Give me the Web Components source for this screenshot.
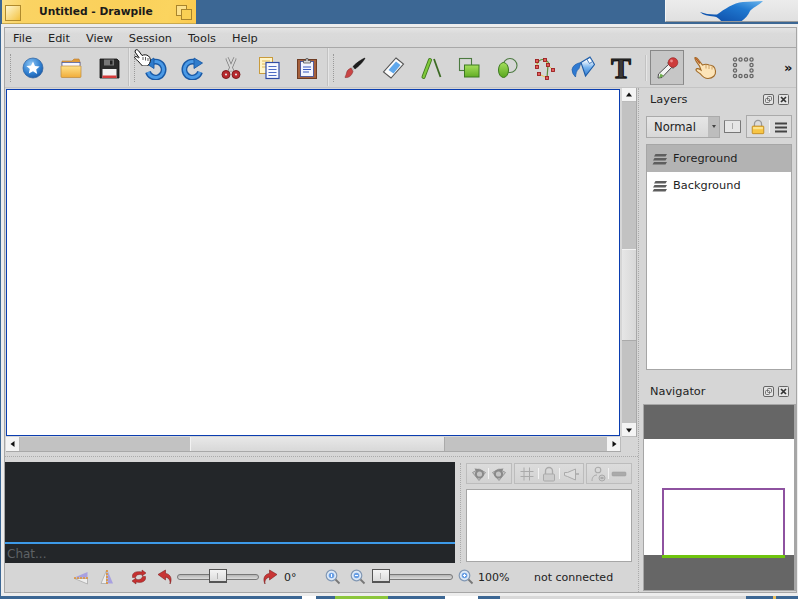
<!DOCTYPE html>
<html><head><meta charset="utf-8">
<style>
html,body{margin:0;padding:0;width:798px;height:599px;overflow:hidden;background:#3c6794;font:11.33px "DejaVu Sans",sans-serif;color:#222}
</style></head><body>
<dp-app></dp-app>
<script>
const UNDO=`<path d="M5 16A8 8 0 1 0 10 6" fill="none" stroke="#1a5aa6" stroke-width="5.800"/><path d="M5 16A8 8 0 1 0 10 6" fill="none" stroke="#4b9ae6" stroke-width="3"/><path d="M2.500 7L11 2V12.500z" fill="#2f7ccc" stroke="#1a5aa6" stroke-width=".9"/>`;
const ICONS={
new:`<defs><radialGradient id="g" cx=".4" cy=".3" r=".8"><stop offset="0" stop-color="#8cc4f2"/><stop offset=".6" stop-color="#2f7fd0"/><stop offset="1" stop-color="#154f9c"/></radialGradient></defs><circle cx="12" cy="12" r="10" fill="url(#g)" stroke="#2a5f9e" stroke-width=".7"/><path d="M12 5.500l2 4.400 4.600.5-3.400 3.100 1 4.600L12 15.300l-4.200 2.300 1-4.600-3.400-3.100 4.600-.5z" fill="#fff"/>`,
open:`<defs><linearGradient id="g" x2="0" y2="1"><stop offset="0" stop-color="#ffe28a"/><stop offset="1" stop-color="#f0ac3a"/></linearGradient></defs><path d="M3 5h10l2-2h5l1 3v3H3z" fill="#e09a38" stroke="#b87a2c" stroke-width=".6"/><rect x="3" y="6.500" width="18" height="4" fill="#f6f6ff" stroke="#3b55a8" stroke-width=".7"/><path d="M2 10h20v10.500q0 1-1 1H3q-1 0-1-1z" fill="url(#g)" stroke="#bb8a3c" stroke-width=".7"/>`,
save:`<path d="M3 3h17l2 2v17H3z" fill="#2c2c2c" stroke="#111" stroke-width=".8"/><rect x="7" y="3.500" width="10" height="6" fill="#777"/><rect x="13" y="4.500" width="2.500" height="4" fill="#222"/><rect x="5.500" y="13" width="14" height="9" fill="#f2f2f2"/><rect x="5.500" y="19.500" width="14" height="2.500" fill="#d63b3b"/>`,
undo:UNDO,
redo:`<g transform="matrix(-1 0 0 1 24 0)">${UNDO}</g>`,
cut:`<path d="M8 2l5.500 13M16 2l-5.500 13" stroke="#777" stroke-width="3.400" fill="none"/><path d="M8 2l5.500 13M16 2l-5.500 13" stroke="#d8d8d8" stroke-width="2" fill="none"/><circle cx="7" cy="18.500" r="4" fill="#b8282e" stroke="#7e1e1e"/><circle cx="17" cy="18.500" r="4" fill="#b8282e" stroke="#7e1e1e"/><circle cx="7" cy="18.500" r="1.100" fill="#ddd"/><circle cx="17" cy="18.500" r="1.100" fill="#ddd"/>`,
copy:`<rect x="2.500" y="1.500" width="13" height="16" fill="#fff5c8" stroke="#c99b3c"/><path d="M5 5h8M5 8h8M5 11h8" stroke="#e0b858"/><rect x="9" y="6.500" width="13" height="16" fill="#f6f8ff" stroke="#2f4ba4" stroke-width="1.200"/><path d="M11.500 10.500h8M11.500 13.500h8M11.500 16.500h8M11.500 19.500h8" stroke="#4d6bc4" stroke-width="1.200"/>`,
paste:`<rect x="2.500" y="3.500" width="19" height="19" fill="#a6603c" stroke="#6e3c24"/><rect x="5.500" y="5.500" width="13" height="15" fill="#f4f6ff" stroke="#34499c" stroke-width=".8"/><path d="M8 11h8M8 13.500h8M8 16h6" stroke="#3a5bc0" stroke-width="1.200"/><path d="M8.500 7V4.500h2.500v-2h2v2h2.500V7z" fill="#d8d8d8" stroke="#555" stroke-width=".8"/>`,
brush:`<path d="M22 2c-1 3-6 8-10 11l-2-2.500C13 7 19 3 22 2z" fill="#1d1d1d" stroke="#000" stroke-width=".5"/><path d="M11.500 13.500l-2.300-3 -1.500 1.500 2.300 3z" fill="#bbb"/><path d="M8 12c-2 1-4 2-4.500 5-.3 2-1.500 3.500-1.500 4.500 3 .5 6.500-1 8-6z" fill="#c94545" stroke="#7e2a2a" stroke-width=".5"/>`,
eraser:`<path d="M15 2l7.500 6L10 22l-7.500-6z" fill="#fcfcfc" stroke="#555" stroke-width="1.100"/><path d="M15 5.500l4.500 3.500-7 8.500-5-3.500z" fill="#5fa8ec"/>`,
line:`<path d="M4.500 21L11 4" stroke="#3f7a1e" stroke-width="4" stroke-linecap="round"/><path d="M4.500 21L11 4" stroke="#80c83c" stroke-width="2.200" stroke-linecap="round"/><path d="M15 3l6.500 18" stroke="#3c6a24" stroke-width="1.800"/>`,
rect:`<rect x="2.500" y="2.500" width="12" height="12" fill="none" stroke="#4c7a40" stroke-width="1.100"/><defs><linearGradient id="g" x2="0" y2="1"><stop offset="0" stop-color="#a5df5c"/><stop offset="1" stop-color="#62ad24"/></linearGradient></defs><rect x="7.500" y="9" width="14.500" height="12" fill="url(#g)" stroke="#3c7a20"/>`,
ellipse:`<circle cx="15" cy="9.500" r="7" fill="none" stroke="#4c7a40" stroke-width="1.100"/><defs><linearGradient id="g" x2="0" y2="1"><stop offset="0" stop-color="#a5df5c"/><stop offset="1" stop-color="#58a61e"/></linearGradient></defs><ellipse cx="8.500" cy="14" rx="5" ry="7.500" fill="url(#g)" stroke="#3c7a20"/>`,
bezier:`<path d="M4 8Q7 2 12 4T15 9L14 22" fill="none" stroke="#5a8f3a" stroke-width="1.200"/><path d="M4 11V5M12 4l3 5 5 5M6 18l8 4" stroke="#e8c84a" fill="none" stroke-width="1"/><g fill="#e25c5c" stroke="#9c2020" stroke-width=".9"><rect x="2.500" y="9.500" width="3" height="3"/><rect x="2.500" y="3.500" width="3" height="3"/><rect x="10.500" y="2.500" width="3" height="3"/><rect x="13.500" y="7.500" width="3" height="3"/><rect x="18.500" y="12.500" width="3" height="3"/><rect x="4.500" y="16.500" width="3" height="3"/><rect x="12.500" y="20.500" width="3" height="3"/></g>`,
fill:`<defs><linearGradient id="g" x2="0" y2="1"><stop offset=".2" stop-color="#f2f7fd"/><stop offset=".55" stop-color="#79b4ee"/><stop offset="1" stop-color="#2f7ad2"/></linearGradient></defs><path d="M10 6.500L19 1l4.500 7.500L14.500 20z" fill="url(#g)" stroke="#1c5ca8" stroke-width="1.100"/><path d="M16 3.500l3-2 2.500 4-3 2z" fill="#fff" stroke="#1c5ca8" stroke-width=".8"/><path d="M10 6.500Q2 8 1 13.500q0 4 3.500 7.500c.5-3 .5-6 3.500-8.500z" fill="#2f7ad2" stroke="#1c5ca8" stroke-width=".7"/>`,
picker:`<path d="M14 8l3 3L7 21.500 3 22l.5-4z" fill="#f4f4f4" stroke="#4d4d4d" stroke-width="1"/><path d="M5.500 17.500l3 2L7 21 4 22z" fill="#70b050"/><path d="M12 7l6 6 1.500-1.500-6-6z" fill="#777"/><circle cx="18" cy="6.500" r="4.800" fill="#cd3b3b" stroke="#9c2a2a" stroke-width=".7"/><circle cx="16.500" cy="5" r="1.400" fill="#ee8a8a"/>`,
hand:`<path d="M2 1.500C4 1 5 3 6 4.500L9.500 9C12 8 14 8 16 9c3 0 6 2 6.500 6 .5 4-2.500 7.500-7.500 7.500-4 0-6-2.500-7.500-4.500C6 16.500 2.500 15.500 3 13.500 3.500 12 6 12.500 8 14L6.500 10C5 7.500 1 3.500 2 1.500z" fill="#fce4b8" stroke="#a06a28" stroke-width="1.100"/><path d="M13 9v3.500M16 9.500V13M19 10.500V13.500" stroke="#c89a5c" stroke-width=".9"/><path d="M2.500 2L7 7.500" stroke="#b55a20" stroke-width="1.300"/>`,
select:`<g fill="none" stroke="#666" stroke-width="1.300"><circle cx="4" cy="3.500" r="1.600"/><circle cx="9.500" cy="3.500" r="1.600"/><circle cx="15" cy="3.500" r="1.600"/><circle cx="20.500" cy="3.500" r="1.600"/><circle cx="4" cy="9" r="1.600"/><circle cx="20.500" cy="9" r="1.600"/><circle cx="4" cy="14.500" r="1.600"/><circle cx="20.500" cy="14.500" r="1.600"/><circle cx="4" cy="20" r="1.600"/><circle cx="9.500" cy="20" r="1.600"/><circle cx="15" cy="20" r="1.600"/><circle cx="20.500" cy="20" r="1.600"/></g>`,
cursor:`<path d="M1.500 1C3 0 4.500 1.500 5.500 3L8 6.500C10 5.500 12.500 5.500 14.500 7c2 1.500 2.500 5 1 7.500L13.500 17H8.500C7 15.500 5 13 3.500 11.500 2 10.500.5 9 .5 8c.5-1 2.500-.5 4 1L5 8.500 1 3z" fill="#fff" stroke="#111" stroke-width="1"/><path d="M9 8v3M11.500 8v3.500M14 9v3" stroke="#111" stroke-width=".7"/>`,
layer:`<g fill="#5e5e5e"><path d="M3 5.500l1.500-2.500H16l-1.500 2.500z"/><path d="M2 9.500l1.500-2.500H16l-1.500 2.500z"/><path d="M1.500 13.500L3 11h13l-1.500 2.500z"/></g>`,
lock:`<path d="M5 8V5.500a4 4 0 0 1 8 0V8" fill="none" stroke="#999" stroke-width="1.400"/><rect x="2.500" y="8" width="13" height="8.500" rx=".8" fill="#f7c544" stroke="#c08a20"/><rect x="3.500" y="9" width="11" height="2.500" fill="#fde38c"/>`,
menu:`<path d="M2 4.500h12M2 8.500h12M2 12.500h12" stroke="#444" stroke-width="1.800"/>`,
flipv:`<path d="M1.500 8.500L14.500 3v5.500z" fill="#a8a0e0"/><path d="M1.500 9.500l13 5.500V9.500z" fill="#eee" stroke="#aaa" stroke-width=".8"/><path d="M1 9h14" stroke="#e09030" stroke-width="1.600" stroke-dasharray="2 1"/>`,
fliph:`<path d="M7.500 1.500L2 14.500h5.500z" fill="#eee" stroke="#aaa" stroke-width=".8"/><path d="M8.500 1.500L14 14.500H8.500z" fill="#a8a0e0"/><path d="M8 1v14" stroke="#e09030" stroke-width="1.600" stroke-dasharray="2 1"/>`,
rotreset:`<path d="M1.500 6C2.500 3 6 2 11 3V1l4 3-4 3V5.500C7 5 5 6 4.500 8.500H1.500z" fill="#c53030" stroke="#7e1e1e" stroke-width=".5"/><path d="M14.500 10C13.500 13 10 14 5 13v2l-4-3 4-3v1.500c4 .5 6-.5 6.500-3h3z" fill="#c53030" stroke="#7e1e1e" stroke-width=".5"/>`,
rotl:`<path d="M14 15c.5-3-.5-6-4.500-7V11L2 5.500 9.500 1v3.500c5 .5 7 5.500 4.500 10.500z" fill="#c93535" stroke="#7e1e1e" stroke-width=".6"/>`,
rotr:`<g transform="matrix(-1 0 0 1 16 0)"><path d="M14 15c.5-3-.5-6-4.500-7V11L2 5.500 9.500 1v3.500c5 .5 7 5.500 4.500 10.500z" fill="#c93535" stroke="#7e1e1e" stroke-width=".6"/></g>`,
zoomf:`<circle cx="6.500" cy="6.500" r="5.300" fill="#dce8f6" stroke="#8298b4" stroke-width="1.200"/><circle cx="6.500" cy="6.500" r="2.800" fill="#6a9fe4"/><path d="M6.500 5v3" stroke="#fff"/><path d="M10.500 10.500l4 4" stroke="#777" stroke-width="1.800"/>`,
zoomout:`<circle cx="6.500" cy="6.500" r="5.300" fill="#dce8f6" stroke="#8298b4" stroke-width="1.200"/><circle cx="6.500" cy="6.500" r="2.800" fill="#6a9fe4"/><path d="M5 6.500h3" stroke="#fff"/><path d="M10.500 10.500l4 4" stroke="#777" stroke-width="1.800"/>`,
zoomin:`<circle cx="6.500" cy="6.500" r="5.300" fill="#dce8f6" stroke="#8298b4" stroke-width="1.200"/><circle cx="6.500" cy="6.500" r="2.800" fill="#6a9fe4"/><path d="M5 6.500h3M6.500 5v3" stroke="#fff"/><path d="M10.500 10.500l4 4" stroke="#777" stroke-width="1.800"/>`,
c_undo:`<path d="M1.500 6.500L8 3l6.500 3.500L8 14.500z" fill="#c4c4c4" stroke="#999"/><circle cx="8.500" cy="8" r="3.600" fill="none" stroke="#8a8a8a" stroke-width="2"/><path d="M3.500 2.500l4.500.5-2 4z" fill="#8a8a8a"/>`,
c_redo:`<g transform="matrix(-1 0 0 1 16 0)"><path d="M1.500 6.500L8 3l6.500 3.500L8 14.500z" fill="#c4c4c4" stroke="#999"/><circle cx="8.500" cy="8" r="3.600" fill="none" stroke="#8a8a8a" stroke-width="2"/><path d="M3.500 2.500l4.500.5-2 4z" fill="#8a8a8a"/></g>`,
c_grid:`<path d="M5 1.500v13M10.500 1.500v13M1.500 5.500h13M1.500 10.500h13" stroke="#aaa" fill="none"/>`,
c_lock:`<path d="M4.500 8V5a3.500 3.500 0 0 1 7 0v3" fill="none" stroke="#aaa" stroke-width="1.300"/><rect x="2.500" y="8" width="11" height="7" rx="1" fill="#ccc" stroke="#aaa"/>`,
c_horn:`<path d="M1.500 6.500v3l3 1 8 3.500v-11l-8 3.500z" fill="#ddd" stroke="#aaa"/><path d="M13 8h3" stroke="#aaa" stroke-width="1.500"/>`,
c_user:`<circle cx="7" cy="4" r="2.800" fill="none" stroke="#aaa" stroke-width="1.100"/><path d="M1 15c0-4 2-6 5-6" fill="none" stroke="#aaa"/><circle cx="11" cy="12" r="3" fill="#ccc" stroke="#aaa"/><path d="M9.500 12h3" stroke="#888"/>`,
c_minus:`<rect x="1" y="6" width="14" height="4" rx="1" fill="#aaa" stroke="#999" stroke-width=".5"/>`,
float:`<rect x=".5" y=".5" width="10" height="10" rx="1.500" fill="#e4e4e4" stroke="#666" stroke-width="1"/><rect x="2.500" y="4.500" width="4" height="4" rx="1" fill="none" stroke="#666" stroke-width=".9"/><rect x="4.500" y="2.500" width="4" height="4" rx="1" fill="none" stroke="#666" stroke-width=".9"/>`,
close:`<rect x=".5" y=".5" width="10" height="10" rx="1" fill="#e4e4e4" stroke="#666" stroke-width="1"/><path d="M3 3l5 5M8 3l-5 5" stroke="#333" stroke-width="1.700"/>`,
up:`<path d="M2 6.500L5 2.500l3 4z" fill="#111"/>`,
down:`<path d="M2 3.500L5 7.500l3-4z" fill="#111"/>`,
left:`<path d="M6.500 2L2.500 5l4 3z" fill="#111"/>`,
right:`<path d="M3.500 2L7.500 5l-4 3z" fill="#111"/>`,
feather:`<defs><linearGradient id="g" x1="0" y1="1" x2="1" y2="0"><stop offset="0" stop-color="#0b45a0"/><stop offset=".65" stop-color="#1f78d0"/><stop offset="1" stop-color="#69b4ec"/></linearGradient></defs><path d="M0 12Q8 15 17 14.500C25 9 33 3 43 2L63 1C58 6 52 8 50 11 48 16 44 20 40 22H22C20 20 18 17 14 16.500 8 16 3 15 0 12z" fill="url(#g)"/>`
};
function def(name,tpl){const t=document.createElement('template');t.innerHTML=tpl;
 customElements.define(name,class extends HTMLElement{constructor(){super();this.attachShadow({mode:'open'}).appendChild(t.content.cloneNode(true))}});}

class DpIcon extends HTMLElement{constructor(){super();this.attachShadow({mode:'open'})}
 connectedCallback(){const n=this.getAttribute('name'),s=this.getAttribute('size')||24,v=this.getAttribute('view')||s,w=this.getAttribute('w')||s;
 this.shadowRoot.innerHTML=`<style>:host{display:block;width:${w}px;height:${s}px;flex:none}svg{display:block}</style><svg xmlns="http://www.w3.org/2000/svg" width="${w}" height="${s}" viewBox="0 0 ${this.getAttribute('vw')||v} ${v}">${ICONS[n]}</svg>`}}
customElements.define('dp-icon',DpIcon);

class DpTool extends HTMLElement{constructor(){super();this.attachShadow({mode:'open'})}
 connectedCallback(){const n=this.getAttribute('name');const active=this.hasAttribute('active');
 const inner=n==='text'?`<span class="t">T</span>`:`<dp-icon name="${n}" size="24"></dp-icon>`;
 this.shadowRoot.innerHTML=`<style>:host{display:flex;width:38px;height:39px;align-items:center;justify-content:center;flex:none;box-sizing:border-box}
 .b{display:flex;align-items:center;justify-content:center;width:34px;height:35px;box-sizing:border-box;${active?'background:#c6c6c6;border:1px solid #888;border-bottom-color:#999;':''}}
 .t{font:bold 30px/24px "Liberation Serif",serif;color:#3a3a3a;-webkit-text-stroke:1px #111;text-shadow:0 1px 0 #888}</style><div class="b">${inner}</div>`}}
customElements.define('dp-tool',DpTool);

def('dp-handle',`<style>:host{display:block;width:0;height:28px;border-left:1px dotted #9a9a9a;flex:none}</style>`);

def('dp-titlebar',`<style>:host{display:flex;height:24px;align-items:stretch}
.tab{margin-left:2px;width:194px;box-sizing:border-box;display:flex;align-items:center;position:relative;background:linear-gradient(100deg,#fce08a 0%,#fad363 12%,#fad05a 60%,#fbd45f 85%,#fbc94e 100%);border-bottom:1px solid #c9a94e}
.sq{position:absolute}
.i1{width:14px;height:14px;left:3px;top:5px;border:1px solid #b08a2c;background:linear-gradient(135deg,#fff7d0,#f3c240);}
.name{margin-left:37px;font:bold 10.67px "DejaVu Sans",sans-serif;color:#1a1a1a;white-space:nowrap}
.i2{width:9px;height:9px;left:174px;top:5px;border:1px solid #a8842c;background:#fce08a}
.i3{width:9px;height:9px;left:179px;top:9px;border:1px solid #a8842c;background:#f9d054}
.sp{flex:1}
.logo{width:133px;height:22px;box-sizing:border-box;background:linear-gradient(#ececec,#e0e0e0);border-left:1px solid #f4f4f4;border-bottom:1px solid #9a9a9a;padding-left:34px;overflow:hidden}
</style><div class="tab"><span class="sq i1"></span><span class="name">Untitled - Drawpile</span><span class="sq i2"></span><span class="sq i3"></span></div><div class="sp"></div><div class="logo"><dp-icon name="feather" w="63" size="22" vw="63" view="22"></dp-icon></div>`);

def('dp-menubar',`<style>:host{display:flex;height:20px;box-sizing:border-box;align-items:center;background:linear-gradient(#e4e4e4,#dadada 30%,#d8d8d8);border-bottom:1px solid #a8a8a8;flex:none;padding-top:1px}
span{padding:0 8px;color:#222}</style><span>File</span><span>Edit</span><span>View</span><span>Session</span><span>Tools</span><span>Help</span>`);

def('dp-toolbar',`<style>:host{display:flex;height:40px;box-sizing:border-box;border-bottom:1px solid #c4c4c4;background:#d6d6d6;align-items:center;flex:none;padding-left:5px}
.sep{width:1px;height:38px;background:#c2c2c2;border-right:1px solid #e6e6e6;flex:none;align-self:flex-start}
.m{font:bold 13px "DejaVu Sans",sans-serif;color:#111;margin-left:22px}</style>
<dp-handle style="margin-right:3px"></dp-handle><dp-tool name="new"></dp-tool><dp-tool name="open"></dp-tool><dp-tool name="save"></dp-tool><div class="sep"></div>
<dp-handle style="margin:0 1px 0 4px"></dp-handle><dp-tool name="undo"></dp-tool><dp-tool name="redo"></dp-tool><dp-tool name="cut"></dp-tool><dp-tool name="copy"></dp-tool><dp-tool name="paste"></dp-tool><div class="sep" style="margin-left:1px"></div>
<dp-handle style="margin:0 2px 0 4px"></dp-handle><dp-tool name="brush"></dp-tool><dp-tool name="eraser"></dp-tool><dp-tool name="line"></dp-tool><dp-tool name="rect"></dp-tool><dp-tool name="ellipse"></dp-tool><dp-tool name="bezier"></dp-tool><dp-tool name="fill"></dp-tool><dp-tool name="text"></dp-tool><div class="sep" style="margin:0 1px 0 5px;height:26px;align-self:center"></div>
<dp-tool name="picker" active></dp-tool><dp-tool name="hand"></dp-tool><dp-tool name="select"></dp-tool><span class="m">»</span>`);

class DpScroll extends HTMLElement{constructor(){super();this.attachShadow({mode:'open'})}
 connectedCallback(){const v=this.hasAttribute('vertical');const a=this.getAttribute('before'),b=this.getAttribute('thumb');
 const [i1,i2]=v?['up','down']:['left','right'];
 this.shadowRoot.innerHTML=`<style>:host{display:flex;${v?'flex-direction:column;width:15px;':'height:15px;'}background:#c2c2c2;box-sizing:border-box;${v?'border-right:1px solid #a8a8a8;':'border-bottom:1px solid #a8a8a8;'}}
 .a{background:#f4f4f4;display:flex;align-items:center;justify-content:center;${v?'height:14px;border-bottom:1px solid #bbb':'width:14px;border-right:1px solid #bbb'};flex:none;box-sizing:border-box}
 .t{flex:none;${v?`height:${b}px;margin-top:${a}px;background:linear-gradient(90deg,#e6e6e6,#d8d8d8);border-top:1px solid #f2f2f2;border-bottom:1px solid #aaa`:`width:${b}px;margin-left:${a}px;background:linear-gradient(#e8e8e8,#d8d8d8);border-left:1px solid #f2f2f2;border-right:1px solid #aaa`};box-sizing:border-box}
 .s{flex:1}</style><div class="a"><dp-icon name="${i1}" size="10"></dp-icon></div><div class="t"></div><div class="s"></div><div class="a"><dp-icon name="${i2}" size="10"></dp-icon></div>`}}
customElements.define('dp-scrollbar',DpScroll);

def('dp-canvas',`<style>:host{display:grid;grid-template-columns:615px 16px;grid-template-rows:349px 15px;margin-left:1px;height:364px;flex:none}
.c{background:#fff;border:1px solid #0a3db0;box-sizing:border-box;margin:1px 1px 1px 0}
dp-scrollbar[vertical]{width:15px;margin-left:1px;}
</style><div class="c"></div><dp-scrollbar vertical before="147" thumb="92"></dp-scrollbar><dp-scrollbar before="170" thumb="255"></dp-scrollbar><div></div>`);

def('dp-chat',`<style>:host{display:flex;flex-direction:column;width:450px;height:101px;background:#232629;flex:none}
.m{height:80px;flex:none}.l{height:2px;background:#3d9ae8;flex:none}
.i{flex:1;color:#5e6266;font:12px "DejaVu Sans",sans-serif;padding:2px 2px 0;line-height:17px}</style><div class="m"></div><div class="l"></div><div class="i">Chat...</div>`);

class DpGroup extends HTMLElement{constructor(){super();this.attachShadow({mode:'open'})}
 connectedCallback(){const names=this.getAttribute('icons').split(' ');
 this.shadowRoot.innerHTML=`<style>:host{display:flex;height:21px;box-sizing:border-box;border:1px solid #bcbcbc;background:linear-gradient(#dcdcdc,#d2d2d2);align-items:center;justify-content:space-around;padding:0 3px;flex:none;width:${this.getAttribute('w')}px}
 i{display:block;width:1px;height:11px;background:#f2f2f2;flex:none}</style>`+names.map(n=>`<dp-icon name="${n}" size="16"></dp-icon>`).join('<i></i>')}}
customElements.define('dp-group',DpGroup);

def('dp-userpanel',`<style>:host{display:flex;flex-direction:column;width:166px;flex:none}
.r{display:flex;justify-content:space-between;margin-top:1px}
.l{margin-top:5px;height:73px;background:#fff;border:1px solid #a6a6a6;box-sizing:border-box}</style>
<div class="r"><dp-group w="46" icons="c_undo c_redo"></dp-group><dp-group w="70" icons="c_grid c_lock c_horn"></dp-group><dp-group w="46" icons="c_user c_minus"></dp-group></div><div class="l"></div>`);

class DpSlider extends HTMLElement{constructor(){super();this.attachShadow({mode:'open'})}
 connectedCallback(){const x=this.getAttribute('at'),w=this.getAttribute('w');
 this.shadowRoot.innerHTML=`<style>:host{display:block;width:${w}px;height:16px;position:relative;flex:none}
 .g{position:absolute;left:0;right:0;top:5px;height:6px;box-sizing:border-box;border:1px solid #777;border-radius:3px;background:linear-gradient(#b4b4b4,#dcdcdc)}
 .h{position:absolute;left:${x}px;top:0;width:18px;height:14px;box-sizing:border-box;border:1px solid #555;border-bottom-width:2px;background:linear-gradient(#f4f4f4,#dcdcdc)}
 .h::after{content:"";position:absolute;left:7px;top:3px;width:1px;height:6px;background:#b0b0b0}</style><div class="g"></div><div class="h"></div>`}}
customElements.define('dp-slider',DpSlider);

def('dp-statusbar',`<style>:host{display:flex;height:28px;align-items:center;flex:none;padding-bottom:2px;box-sizing:border-box}
span{white-space:nowrap;font-size:11px;color:#222}</style>
<dp-icon name="flipv" size="16" style="margin-left:68px"></dp-icon><dp-icon name="fliph" size="16" style="margin-left:10px"></dp-icon><dp-icon name="rotreset" size="16" style="margin-left:16px"></dp-icon><dp-icon name="rotl" size="16" style="margin-left:9px"></dp-icon>
<dp-slider w="82" at="32" style="margin-left:5px"></dp-slider><dp-icon name="rotr" size="16" style="margin-left:4px"></dp-icon><span style="margin-left:5px;width:30px">0°</span>
<dp-icon name="zoomf" size="16" style="margin-left:11px"></dp-icon><dp-icon name="zoomout" size="16" style="margin-left:9px"></dp-icon><dp-slider w="81" at="0" style="margin-left:6px"></dp-slider><dp-icon name="zoomin" size="16" style="margin-left:5px"></dp-icon><span style="margin-left:4px;width:56px">100%</span><span>not connected</span>`);

def('dp-docktitle',`<style>:host{display:flex;height:22px;align-items:center;flex:none;padding-left:4px;padding-right:3px}
.n{flex:1}dp-icon{margin-left:4px}</style><span class="n"><slot></slot></span><dp-icon name="float" size="11"></dp-icon><dp-icon name="close" size="11"></dp-icon>`);

class DpLayer extends HTMLElement{constructor(){super();this.attachShadow({mode:'open'})}
 connectedCallback(){const s=this.hasAttribute('selected');
 this.shadowRoot.innerHTML=`<style>:host{display:flex;height:27px;box-sizing:border-box;padding:0 0 2px 4px;align-items:center;${s?'background:#b3b3b3;':''}color:#1e1e1e}dp-icon{margin-right:6px;margin-top:3px}</style><dp-icon name="layer" size="16"></dp-icon><slot></slot>`}}
customElements.define('dp-layer',DpLayer);

def('dp-layers',`<style>:host{display:flex;flex-direction:column;flex:none}
.tb{display:flex;height:23px;margin-top:5px;align-items:center}
.combo{width:74px;height:22px;box-sizing:border-box;border:1px solid #aaa;display:flex;background:linear-gradient(#e6e6e6,#d8d8d8)}
.combo .v{flex:1;padding-left:7px;line-height:20px;font-size:11.6px;color:#222}
.combo .d{width:11px;background:#bdbdbd;display:flex;align-items:center;justify-content:center}
.combo .d::after{content:"";border:2.5px solid transparent;border-top:3px solid #444;border-bottom:0}
.chk{width:17px;height:13px;box-sizing:border-box;margin-left:4px;border:1px solid #777;border-top-color:#999;background:#e6e6e6;border-radius:1px;position:relative}
.chk::after{content:"";position:absolute;left:7px;top:2px;width:1px;height:6px;background:#aaa}
.grp{display:flex;align-items:center;justify-content:space-between;width:46px;height:23px;margin-left:5px;box-sizing:border-box;border:1px solid #aaa;background:#dcdcdc;padding:0 2px 0 3px}
.grp i{display:block;width:1px;height:13px;background:#f6f6f6}
.list{margin-top:6px;height:226px;box-sizing:border-box;border:1px solid #a6a6a6;background:#fff}</style>
<div class="tb"><div class="combo"><span class="v">Normal</span><span class="d"></span></div><div class="chk"></div><div class="grp"><dp-icon name="lock" size="16" view="18"></dp-icon><i></i><dp-icon name="menu" size="16"></dp-icon></div></div>
<div class="list"><dp-layer selected>Foreground</dp-layer><dp-layer>Background</dp-layer></div>`);

def('dp-navigator',`<style>:host{display:block;margin:2px 0 0 -3px;height:187px;box-sizing:border-box;border:1px solid #a6a6a6;border-right-width:2px;width:153px;flex:none}
.v{display:flex;flex-direction:column;height:185px;background:#666}
.top{height:34px;flex:none}.w{height:116px;background:#fff;flex:none;padding-left:18px;padding-top:49px;box-sizing:border-box}
.r{position:relative;width:123px;height:68px;box-sizing:border-box;border:2px solid #8e52a0;border-bottom:0}
.r::after{content:"";position:absolute;left:-2px;right:-2px;bottom:-2px;height:3px;background:#6fc40e}</style>
<div class="v"><div class="top"></div><div class="w"><div class="r"></div></div></div>`);

def('dp-window',`<style>:host{display:block;margin-left:1px;height:572px;box-sizing:border-box;padding:3px 1px 3px 3px;background:#ededed}
.f{height:566px;box-sizing:border-box;border:1px solid #a6a6a6;background:#d6d6d6;display:flex;flex-direction:column}
.main{display:flex;flex:1;min-height:0}
.left{width:633px;flex:none;display:flex;flex-direction:column}
.hs{height:10px;flex:none;box-sizing:border-box;padding-top:4px}
.hs div{border-top:1px dotted #aaa}
.bot{display:flex;height:102px;flex:none}
.vs{width:11px;flex:none;display:flex;justify-content:center;padding-right:1px;box-sizing:border-box}
.vs div{border-left:1px dotted #aaa;margin-top:1px;height:100px}
.right{flex:1;display:flex;flex-direction:column;border-left:1px dotted #aaa;padding-left:7px;padding-right:4px;box-sizing:border-box;min-width:0}
.gap{height:10px;flex:none}</style>
<div class="f"><dp-menubar></dp-menubar><dp-toolbar></dp-toolbar>
<div class="main"><div class="left"><dp-canvas></dp-canvas><div class="hs"><div></div></div><div class="bot"><dp-chat></dp-chat><div class="vs"><div></div></div><dp-userpanel></dp-userpanel></div><dp-statusbar></dp-statusbar></div>
<div class="right"><dp-docktitle>Layers</dp-docktitle><dp-layers></dp-layers><div class="gap"></div><dp-docktitle>Navigator</dp-docktitle><dp-navigator></dp-navigator></div></div></div>`);

def('dp-strip',`<style>:host{display:block;height:3px;position:relative;overflow:hidden}
i{position:absolute;top:0;height:3px}</style>
<i style="left:302px;width:14px;background:#fff"></i><i style="left:335px;width:53px;background:#8cc63c"></i><i style="left:445px;width:33px;background:#fff"></i><i style="left:500px;width:246px;background:#d8d8d8"></i><i style="left:773px;width:3px;background:#e8c060"></i>`);

def('dp-app',`<style>:host{display:block;width:798px;height:599px;position:relative}
.cur{position:absolute;left:134px;top:49px}</style>
<dp-titlebar></dp-titlebar><dp-window></dp-window><dp-strip></dp-strip><dp-icon class="cur" name="cursor" size="17" view="17"></dp-icon>`);
</script></body></html>
